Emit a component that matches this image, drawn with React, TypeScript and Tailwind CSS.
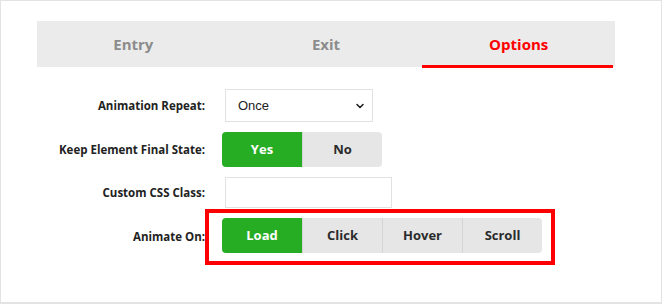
import React from 'react'

const font = { fontFamily: '"Open Sans", "Noto Sans", sans-serif' }

function Tab({ label, active = false }: { label: string; active?: boolean }) {
  return (
    <div className="relative flex flex-1 items-center justify-center">
      <span
        className={
          active
            ? 'text-[15px] font-bold text-[#ff0000]'
            : 'text-[15px] font-bold text-[#8c8c8c]'
        }
      >
        {label}
      </span>
      {active ? (
        <div className="absolute bottom-[-1px] left-0 right-[2px] h-[3px] bg-[#ff0000]" />
      ) : null}
    </div>
  )
}

function Label({ children }: { children: React.ReactNode }) {
  return (
    <div className="w-[205px] shrink-0 pr-[1px] text-right text-[11.5px] font-bold text-[#222]">
      {children}
    </div>
  )
}

function SegButton({
  label,
  active = false,
  first = false,
  last = false,
}: {
  label: string
  active?: boolean
  first?: boolean
  last?: boolean
}) {
  return (
    <div
      className={[
        'flex w-[80px] items-center justify-center text-[13px] font-bold',
        active ? 'bg-[#27ad24] text-white' : 'bg-[#e6e6e6] text-[#2b2b2b]',
        first ? 'rounded-l-[4px]' : '',
        last ? 'rounded-r-[4px]' : '',
        !active && !first ? 'border-l border-[#d4d4d4]' : '',
      ].join(' ')}
    >
      {label}
    </div>
  )
}

export default function App() {
  return (
    <div style={font} className="h-[305px] w-[662px] bg-white">
      <div className="h-[304px] w-[662px] border border-b-2 border-[#e3e3e3] pt-[20px]">
        <div className="ml-[36px] flex h-[46px] w-[578px] bg-[#ebebeb]">
          <Tab label="Entry" />
          <Tab label="Exit" />
          <Tab label="Options" active />
        </div>

        <div className="mt-[22px] flex flex-col">
          <div className="flex h-[33px] items-center">
            <Label>Animation Repeat:</Label>
            <div
              className="ml-[19px] flex h-[33px] w-[148px] items-center justify-between border border-[#e2e2e2] bg-white pl-[12px] pr-[7px] text-[13px] text-[#222]"
              style={{ fontFamily: '"Liberation Sans", Arial, sans-serif' }}
            >
              <span>Once</span>
              <svg width="10" height="10" viewBox="0 0 10 10">
                <path
                  d="M2 3.5 L5 6.5 L8 3.5"
                  fill="none"
                  stroke="#222"
                  strokeWidth="1.6"
                  strokeLinecap="round"
                  strokeLinejoin="round"
                />
              </svg>
            </div>
          </div>

          <div className="mt-[10px] flex h-[35px] items-center">
            <Label>Keep Element Final State:</Label>
            <div className="ml-[16px] flex h-[35px]">
              <SegButton label="Yes" active first />
              <SegButton label="No" last />
            </div>
          </div>

          <div className="mt-[10px] flex h-[31px] items-center">
            <Label>Custom CSS Class:</Label>
            <div className="ml-[19px] h-[31px] w-[167px] border border-[#e2e2e2] bg-white" />
          </div>

          <div className="mt-[1px] flex items-center">
            <Label>Animate On:</Label>
            <div className="ml-[-1px] border-4 border-[#ff0000] pb-[8px] pl-[13px] pr-[9px] pt-[5px]">
              <div className="flex h-[35px]">
                <SegButton label="Load" active first />
                <SegButton label="Click" />
                <SegButton label="Hover" />
                <SegButton label="Scroll" last />
              </div>
            </div>
          </div>
        </div>
      </div>
    </div>
  )
}
